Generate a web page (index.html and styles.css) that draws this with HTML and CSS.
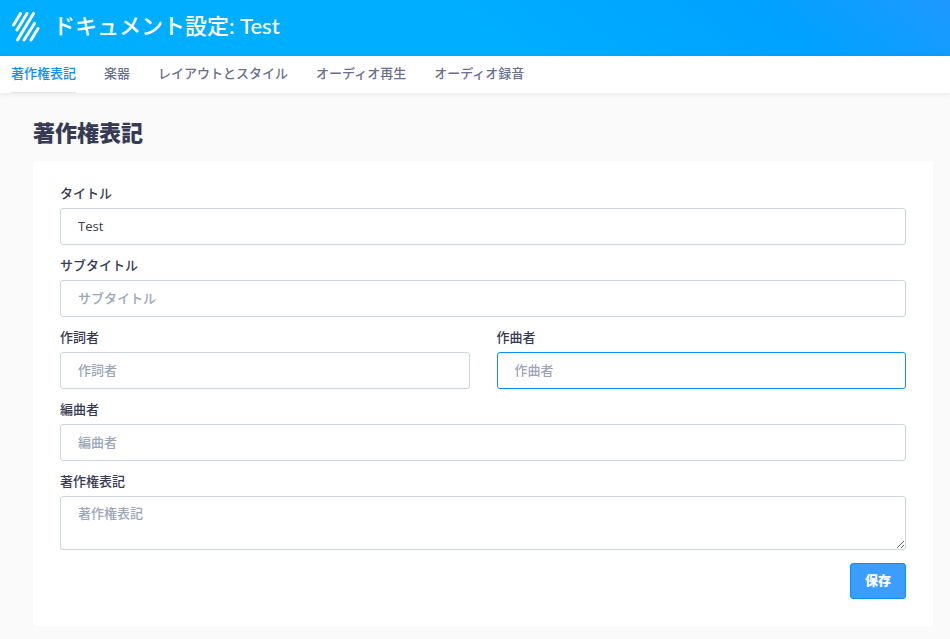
FILE: index.html
```
<!DOCTYPE html>
<html lang="ja">
<head>
<meta charset="utf-8">
<meta name="viewport" content="width=device-width, initial-scale=1">
<title>ドキュメント設定: Test</title>
<link rel="stylesheet" href="styles.css">
</head>
<body>
<header class="header">
  <svg class="logo" viewBox="0 0 28 30" aria-hidden="true">
    <path d="M1.500 13 8.500 1.500M5 18 15 1.500M5.500 28 21.500 1.500M12 28 22.500 11.500M19 28 26 16.500"/>
  </svg>
  <div class="header-title">ドキュメント設定: Test</div>
</header>
<nav class="tabs">
  <a class="tab tab-active" href="#copyright">著作権表記</a>
  <a class="tab" href="#instruments">楽器</a>
  <a class="tab" href="#layout">レイアウトとスタイル</a>
  <a class="tab" href="#playback">オーディオ再生</a>
  <a class="tab" href="#recording">オーディオ録音</a>
</nav>
<main class="content">
  <h1 class="heading">著作権表記</h1>
  <form class="card">
    <div class="field">
      <label for="title">タイトル</label>
      <input id="title" type="text" value="Test">
    </div>
    <div class="field">
      <label for="subtitle">サブタイトル</label>
      <input id="subtitle" type="text" placeholder="サブタイトル">
    </div>
    <div class="field-row">
      <div class="field">
        <label for="lyricist">作詞者</label>
        <input id="lyricist" type="text" placeholder="作詞者">
      </div>
      <div class="field">
        <label for="composer">作曲者</label>
        <input id="composer" class="highlighted" type="text" placeholder="作曲者">
      </div>
    </div>
    <div class="field">
      <label for="arranger">編曲者</label>
      <input id="arranger" type="text" placeholder="編曲者">
    </div>
    <div class="field">
      <label for="copyright">著作権表記</label>
      <textarea id="copyright" placeholder="著作権表記"></textarea>
    </div>
    <div class="actions"><button class="save" type="submit">保存</button></div>
  </form>
</main>
</body>
</html>
```
FILE: styles.css
```
* { box-sizing: border-box; }
body {
  margin: 0;
  background: #fafafa;
  color: #363a54;
  font-family: "Open Sans", "Noto Sans CJK JP", sans-serif;
  font-size: 13px;
  line-height: 20px;
}
.header {
  display: flex;
  align-items: center;
  gap: 13px;
  height: 56px;
  padding: 0 12px 2px;
  background: linear-gradient(38deg, #00aeff 50%, #00a2ff 80%, #1e98ff 100%);
  color: #fff;
}
.logo {
  width: 28px;
  height: 30px;
  fill: none;
  stroke: #fff;
  stroke-width: 3;
  stroke-linecap: round;
}
.header-title {
  padding-bottom: 2px;
  font-family: Lato, "Noto Sans CJK JP", sans-serif;
  font-size: 22px;
  font-weight: 500;
  line-height: 32px;
}
.tabs {
  display: flex;
  gap: 28px;
  height: 37px;
  padding: 0 11px;
  background: #fff;
  box-shadow: 0 1px 5px rgba(0, 0, 0, 0.08);
}
.tab {
  padding-top: 7px;
  border-bottom: 1px solid transparent;
  color: #686f90;
  font-weight: 500;
  text-decoration: none;
}
.tab-active {
  border-color: #e2e4ea;
  color: #0d8eff;
}
.content { padding: 23px 17px 13px 33px; }
.heading {
  margin: 0 0 13px;
  font-size: 22px;
  font-weight: 800;
  line-height: 32px;
}
.card {
  padding: 22px 27px 27px;
  border-radius: 3px;
  background: #fff;
}
.field { margin-bottom: 10px; }
.field-row {
  display: grid;
  grid-template-columns: 1fr 1fr;
  gap: 27px;
}
label {
  display: block;
  margin-bottom: 5px;
  font-weight: 500;
}
input, textarea {
  display: block;
  width: 100%;
  height: 37px;
  margin: 0;
  padding: 6px 17px 8px;
  border: 1px solid #cbd5da;
  border-radius: 3px;
  outline: 0;
  background: #fff;
  color: #363a54;
  font: inherit;
}
textarea {
  height: 54px;
  resize: vertical;
}
input::placeholder, textarea::placeholder {
  color: #9ca6ba;
  font-weight: 500;
  opacity: 1;
}
input:focus, textarea:focus, .highlighted { border-color: #0d8eff; }
.actions {
  display: flex;
  justify-content: flex-end;
  padding-top: 3px;
}
.save {
  height: 36px;
  padding: 0 14px 2px;
  border: 1px solid #0d8eff;
  border-radius: 3px;
  background: #3b9eff;
  color: #fff;
  font: inherit;
  font-weight: 800;
}
```
